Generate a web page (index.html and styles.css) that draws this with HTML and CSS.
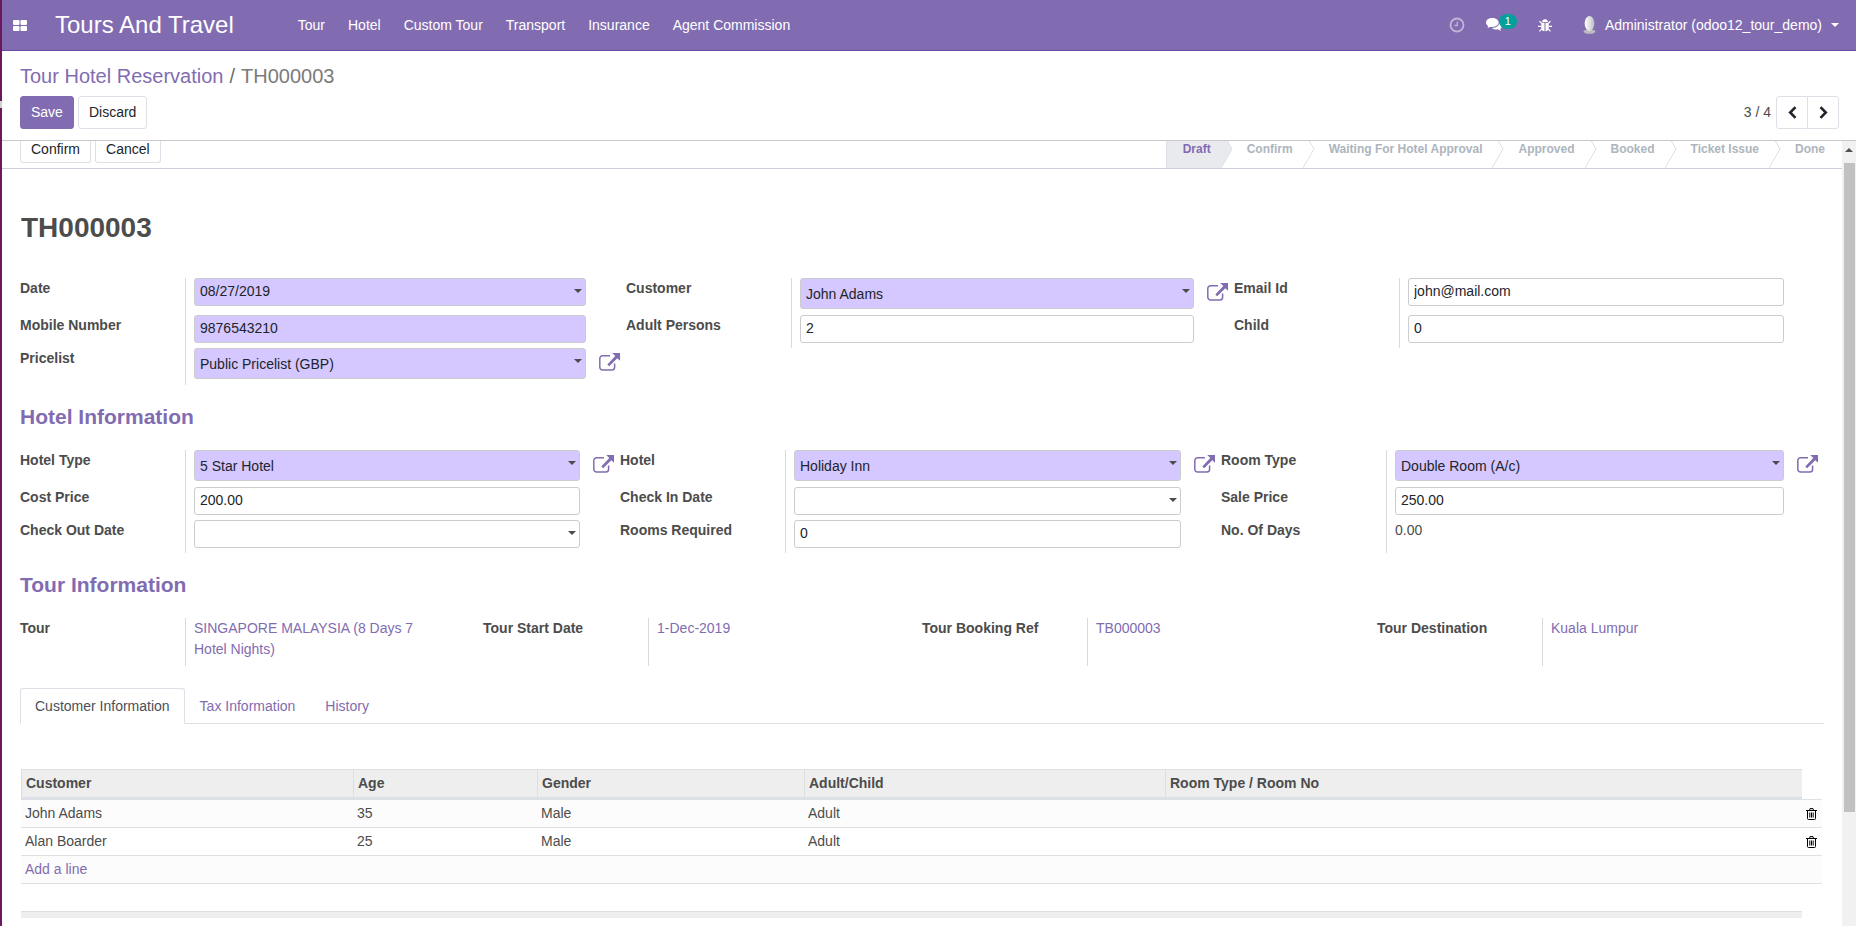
FILE: index.html
```html
<!DOCTYPE html>
<html lang="en">
<head>
    <meta charset="UTF-8">
    <meta name="viewport" content="width=device-width, initial-scale=1.0">
    <title>TH000003 - Tours And Travel</title>
    <link rel="stylesheet" href="styles.css">
</head>
<body>
    <!-- Shared icons -->
    <svg class="sprite" width="0" height="0">
        <symbol id="icon-external" viewBox="0 0 21 18">
            <path d="M11 2.7H3.6A2.8 2.8 0 0 0 .8 5.5v8.7A2.8 2.8 0 0 0 3.6 17h9.2a2.8 2.8 0 0 0 2.8-2.8V10.500" fill="none" stroke="currentColor" stroke-width="1.500"/>
            <path d="M13.200 0H21v7.800l-2.700-2.600-8.100 8.100-1.900-1.900 8-8.300z" fill="currentColor"/>
        </symbol>
        <symbol id="icon-trash" viewBox="0 0 11 12">
            <path d="M0 2.500h11M3.500 2.500l.5-1.900h3l.5 1.900M1.500 2.500v8q0 1 1 1h6q1 0 1-1v-8M3.800 4.500v5M5.500 4.500v5M7.200 4.500v5" fill="none" stroke="currentColor"/>
        </symbol>
        <symbol id="icon-step" viewBox="0 0 12 38">
            <path class="step-fill" d="M0 0l11 19L0 38z"/>
            <path class="step-line" d="M0 0l11 19L0 38"/>
        </symbol>
    </svg>

    <div class="screen">
        <div class="edge"></div>
        <div class="client">
            <header class="navbar">
                <button class="apps" aria-label="Applications">
                    <svg width="14" height="11" viewBox="0 0 14 11" fill="currentColor"><rect width="6.500" height="5" rx="1"/><rect x="7.500" width="6.500" height="5" rx="1"/><rect y="6" width="6.500" height="5" rx="1"/><rect x="7.500" y="6" width="6.500" height="5" rx="1"/></svg>
                </button>
                <a class="brand" href="#">Tours And Travel</a>
                <nav class="menu">
                    <a href="#">Tour</a>
                    <a href="#">Hotel</a>
                    <a href="#">Custom Tour</a>
                    <a href="#">Transport</a>
                    <a href="#">Insurance</a>
                    <a href="#">Agent Commission</a>
                </nav>
                <div class="systray">
                    <button class="tray-clock" aria-label="Activities">
                        <svg width="16" height="16" viewBox="0 0 16 16" fill="none" stroke="currentColor"><circle cx="8" cy="8" r="6.500" stroke-width="1.800"/><path d="M8.300 4.500v4H5.500" stroke-width="1.300"/></svg>
                    </button>
                    <button class="tray-chat" aria-label="Conversations">
                        <svg width="16" height="14" viewBox="0 0 16 14" fill="currentColor"><path d="M6.300 0C2.800 0 0 2 0 4.600c0 1.500.9 2.800 2.300 3.600-.2.700-.6 1.300-1.100 1.800 1.300-.1 2.400-.6 3.300-1.300.6.100 1.200.2 1.800.2 3.500 0 6.300-2 6.300-4.400S9.800 0 6.300 0z"/><path d="M13.600 4c.1 3.300-3.300 5.900-7.600 6 1.100 1 2.700 1.500 4.300 1.500.6 0 1.100 0 1.600-.2.900.7 2 1.200 3.300 1.400-.4-.5-.8-1.100-1-1.800 1.200-.8 1.800-1.800 1.800-3.100 0-1.500-.9-2.900-2.400-3.800z"/></svg>
                        <span class="badge">1</span>
                    </button>
                    <button class="tray-bug" aria-label="Debug">
                        <svg width="14" height="13" viewBox="0 0 14 13"><path d="M4.200 3a2.800 2.800 0 0 1 5.600 0z" fill="currentColor"/><path d="M3.300 3.700h3.200v8.600c-2 0-3.200-1.500-3.200-3.600zM7.500 3.700h3.200v5c0 2.100-1.200 3.600-3.200 3.600z" fill="currentColor"/><path d="M1.500 2.200l2.300 2.300M12.500 2.200l-2.300 2.300M0 7.300h3.500M14 7.300h-3.500M1.500 12.300l2.500-2.600M12.500 12.300L10 9.700" stroke="currentColor" stroke-width="1.200"/></svg>
                    </button>
                    <button class="user">
                        <svg width="13" height="18" viewBox="0 0 13 18"><defs><linearGradient id="face"><stop offset="0" stop-color="#fff"/><stop offset="1" stop-color="#bfc0c2"/></linearGradient></defs><ellipse cx="6.500" cy="15.600" rx="6" ry="2.200" fill="#bcbcc0"/><ellipse cx="6.500" cy="7.500" rx="4.800" ry="7.500" fill="url(#face)"/></svg>
                        <span>Administrator (odoo12_tour_demo)</span>
                        <svg width="8" height="4" viewBox="0 0 8 4"><path d="M0 0h8L4 4z" fill="currentColor"/></svg>
                    </button>
                </div>
            </header>

            <section class="control-panel">
                <div class="breadcrumb">
                    <a href="#">Tour Hotel Reservation</a>
                    <span>/</span>
                    <span class="current">TH000003</span>
                </div>
                <div class="panel-row">
                    <div class="buttons">
                        <button class="btn btn-primary">Save</button>
                        <button class="btn">Discard</button>
                    </div>
                    <div class="pager">
                        <span>3 / 4</span>
                        <div class="pager-buttons">
                            <button class="btn" aria-label="Previous"><svg width="9" height="13" viewBox="0 0 9 13"><path d="M7.500 1.200L2.200 6.500l5.300 5.300" fill="none" stroke="currentColor" stroke-width="2.600"/></svg></button>
                            <button class="btn" aria-label="Next"><svg width="9" height="13" viewBox="0 0 9 13"><path d="M1.500 1.200l5.300 5.300-5.300 5.300" fill="none" stroke="currentColor" stroke-width="2.600"/></svg></button>
                        </div>
                    </div>
                </div>
            </section>

            <div class="scroll-area">
                <main class="form-view">
                    <div class="statusbar">
                        <div class="buttons">
                            <button class="btn">Confirm</button>
                            <button class="btn">Cancel</button>
                        </div>
                        <div class="steps">
                            <div class="step active"><span>Draft</span><svg width="12" height="38"><use href="#icon-step"/></svg></div>
                            <div class="step"><span>Confirm</span><svg width="12" height="38"><use href="#icon-step"/></svg></div>
                            <div class="step"><span>Waiting For Hotel Approval</span><svg width="12" height="38"><use href="#icon-step"/></svg></div>
                            <div class="step"><span>Approved</span><svg width="12" height="38"><use href="#icon-step"/></svg></div>
                            <div class="step"><span>Booked</span><svg width="12" height="38"><use href="#icon-step"/></svg></div>
                            <div class="step"><span>Ticket Issue</span><svg width="12" height="38"><use href="#icon-step"/></svg></div>
                            <div class="step last"><span>Done</span></div>
                        </div>
                    </div>

                    <div class="sheet">
                        <h1>TH000003</h1>

                        <div class="group group-main">
                            <label for="date">Date</label>
                            <div class="field"><div class="dropdown"><input class="required" type="text" id="date" value="08/27/2019"></div></div>
                            <label for="customer">Customer</label>
                            <div class="field">
                                <div class="dropdown"><select class="required" id="customer"><option>John Adams</option></select></div>
                                <button class="external" aria-label="Open customer"><svg width="21" height="18"><use href="#icon-external"/></svg></button>
                            </div>
                            <label for="email">Email Id</label>
                            <div class="field"><input type="text" id="email" value="john@mail.com"></div>

                            <label for="mobile">Mobile Number</label>
                            <div class="field"><input class="required" type="text" id="mobile" value="9876543210"></div>
                            <label for="adults">Adult Persons</label>
                            <div class="field"><input type="text" id="adults" value="2"></div>
                            <label for="child">Child</label>
                            <div class="field"><input type="text" id="child" value="0"></div>

                            <label for="pricelist">Pricelist</label>
                            <div class="field">
                                <div class="dropdown"><select class="required" id="pricelist"><option>Public Pricelist (GBP)</option></select></div>
                                <button class="external" aria-label="Open pricelist"><svg width="21" height="18"><use href="#icon-external"/></svg></button>
                            </div>
                        </div>

                        <h2>Hotel Information</h2>
                        <div class="group group-hotel">
                            <label for="hotel-type">Hotel Type</label>
                            <div class="field">
                                <div class="dropdown"><select class="required" id="hotel-type"><option>5 Star Hotel</option></select></div>
                                <button class="external" aria-label="Open hotel type"><svg width="21" height="18"><use href="#icon-external"/></svg></button>
                            </div>
                            <label for="hotel">Hotel</label>
                            <div class="field">
                                <div class="dropdown"><select class="required" id="hotel"><option>Holiday Inn</option></select></div>
                                <button class="external" aria-label="Open hotel"><svg width="21" height="18"><use href="#icon-external"/></svg></button>
                            </div>
                            <label for="room-type">Room Type</label>
                            <div class="field">
                                <div class="dropdown"><select class="required" id="room-type"><option>Double Room (A/c)</option></select></div>
                                <button class="external" aria-label="Open room type"><svg width="21" height="18"><use href="#icon-external"/></svg></button>
                            </div>

                            <label for="cost">Cost Price</label>
                            <div class="field"><input type="text" id="cost" value="200.00"></div>
                            <label for="check-in">Check In Date</label>
                            <div class="field"><div class="dropdown"><input type="text" id="check-in"></div></div>
                            <label for="sale">Sale Price</label>
                            <div class="field"><input type="text" id="sale" value="250.00"></div>

                            <label for="check-out">Check Out Date</label>
                            <div class="field"><div class="dropdown"><input type="text" id="check-out"></div></div>
                            <label for="rooms">Rooms Required</label>
                            <div class="field"><input type="text" id="rooms" value="0"></div>
                            <label for="days">No. Of Days</label>
                            <div class="field"><output id="days">0.00</output></div>
                        </div>

                        <h2>Tour Information</h2>
                        <div class="group group-tour">
                            <strong>Tour</strong>
                            <div class="field"><a href="#">SINGAPORE MALAYSIA (8 Days 7 Hotel Nights)</a></div>
                            <strong>Tour Start Date</strong>
                            <div class="field"><a href="#">1-Dec-2019</a></div>
                            <strong>Tour Booking Ref</strong>
                            <div class="field"><a href="#">TB000003</a></div>
                            <strong>Tour Destination</strong>
                            <div class="field"><a href="#">Kuala Lumpur</a></div>
                        </div>

                        <div class="tabs">
                            <a class="tab active" href="#">Customer Information</a>
                            <a class="tab" href="#">Tax Information</a>
                            <a class="tab" href="#">History</a>
                        </div>

                        <table class="list">
                            <colgroup>
                                <col class="col-customer">
                                <col class="col-age">
                                <col class="col-gender">
                                <col class="col-adult">
                                <col>
                                <col class="col-trash">
                            </colgroup>
                            <thead>
                                <tr>
                                    <th>Customer</th>
                                    <th>Age</th>
                                    <th>Gender</th>
                                    <th>Adult/Child</th>
                                    <th>Room Type / Room No</th>
                                    <th class="trash"></th>
                                </tr>
                            </thead>
                            <tbody>
                                <tr>
                                    <td>John Adams</td>
                                    <td>35</td>
                                    <td>Male</td>
                                    <td>Adult</td>
                                    <td></td>
                                    <td class="trash"><button aria-label="Delete row"><svg width="11" height="12"><use href="#icon-trash"/></svg></button></td>
                                </tr>
                                <tr>
                                    <td>Alan Boarder</td>
                                    <td>25</td>
                                    <td>Male</td>
                                    <td>Adult</td>
                                    <td></td>
                                    <td class="trash"><button aria-label="Delete row"><svg width="11" height="12"><use href="#icon-trash"/></svg></button></td>
                                </tr>
                                <tr>
                                    <td colspan="6"><a href="#">Add a line</a></td>
                                </tr>
                                <tr class="blank">
                                    <td colspan="6"></td>
                                </tr>
                            </tbody>
                            <tfoot>
                                <tr>
                                    <td colspan="5"></td>
                                    <td class="trash"></td>
                                </tr>
                            </tfoot>
                        </table>
                    </div>
                </main>
                <div class="scrollbar">
                    <svg width="8" height="4" viewBox="0 0 8 4"><path d="M0 4h8L4 0z" fill="#505050"/></svg>
                    <div class="thumb"></div>
                </div>
            </div>
        </div>
    </div>
</body>
</html>
```

FILE: styles.css
```css
* {
    box-sizing: border-box;
}

body {
    margin: 0;
    font-family: "Liberation Sans", Arial, sans-serif;
    font-size: 14px;
    line-height: 21px;
    color: #4c4c4c;
    background: #fff;
}

a {
    color: #826cb1;
    text-decoration: none;
}

button,
input,
select {
    font: inherit;
    margin: 0;
}

svg {
    display: block;
    flex: none;
}

.sprite {
    position: absolute;
}

.screen {
    display: flex;
    height: 100vh;
    overflow: hidden;
}

.edge {
    width: 2px;
    flex: none;
    background: linear-gradient(#6a1a5c 101px, #cfcfcf 101px, #cfcfcf 108px, #6a1a5c 108px);
}

.client {
    flex: 1;
    min-width: 0;
    display: flex;
    flex-direction: column;
}

/* Top bar */
.navbar {
    flex: none;
    height: 51px;
    display: flex;
    align-items: center;
    padding: 0 17px 0 11px;
    background: #826cb1;
    border-bottom: 1px solid #6649a0;
    color: #fff;
}

.navbar a,
.navbar button {
    color: inherit;
}

.navbar button {
    display: flex;
    align-items: center;
    padding: 0;
    border: none;
    background: none;
}

.brand {
    margin: 0 64px 0 28px;
    font-size: 24px;
    line-height: 36px;
}

.menu {
    display: flex;
    gap: 23px;
}

.systray {
    display: flex;
    align-items: center;
    margin-left: auto;
}

.tray-clock {
    opacity: 0.5;
}

.navbar .tray-chat {
    position: relative;
    margin-left: 21px;
}

.badge {
    position: absolute;
    left: 13px;
    top: -4px;
    width: 18px;
    height: 15px;
    border-radius: 8px;
    background: #00a09d;
    font-size: 11px;
    line-height: 14px;
    text-align: center;
}

.navbar .tray-bug {
    margin-left: 36px;
}

.navbar .user {
    margin-left: 31px;
    gap: 9px;
}

/* Breadcrumb, buttons and pager */
.control-panel {
    flex: none;
    padding: 10px 17px 11px 18px;
    border-bottom: 1px solid #c9c9cc;
}

.breadcrumb {
    display: flex;
    gap: 6px;
    font-size: 20px;
    line-height: 30px;
    color: #6c6c6c;
}

.current {
    color: #7c7b7b;
}

.panel-row {
    display: flex;
    justify-content: space-between;
    align-items: center;
    margin-top: 5px;
}

.buttons {
    display: flex;
    gap: 4px;
}

.btn {
    height: 33px;
    padding: 5px 10px;
    border: 1px solid #dee0e8;
    border-radius: 3px;
    background: #fff;
    color: #212529;
}

.btn-primary {
    border-color: #826cb1;
    background: #826cb1;
    color: #fff;
}

.pager {
    display: flex;
    align-items: center;
    gap: 5px;
}

.pager-buttons {
    display: flex;
}

.pager-buttons .btn {
    width: 32px;
    padding: 0 11px;
}

.pager-buttons .btn:first-child {
    border-radius: 3px 0 0 3px;
}

.pager-buttons .btn:last-child {
    margin-left: -1px;
    border-radius: 0 3px 3px 0;
}

.scroll-area {
    flex: 1;
    min-height: 0;
    display: flex;
    overflow: hidden;
}

.form-view {
    flex: 1;
    min-width: 0;
}

/* The form is scrolled down a little under the control panel */
.statusbar {
    display: flex;
    justify-content: space-between;
    margin-top: -11px;
    padding-left: 18px;
    border-bottom: 1px solid #ced0d9;
}

.statusbar .buttons {
    align-items: flex-end;
    padding-bottom: 5px;
}

.statusbar .btn {
    height: 27px;
    padding: 0 10px;
    border-top: none;
    border-radius: 0 0 3px 3px;
}

.steps {
    display: flex;
    font-size: 12px;
    font-weight: bold;
    line-height: 38px;
    color: #adb5bd;
}

.step {
    display: flex;
    padding-left: 14px;
}

.step span {
    margin-right: 10px;
}

.step svg {
    fill: none;
}

.step-fill {
    fill: inherit;
}

.step-line {
    fill: none;
    stroke: #dee0e8;
}

.step.active {
    padding-left: 16px;
    border-left: 1px solid #dee0e8;
    background: linear-gradient(to left, #fff 12px, #e9eaee 12px);
    color: #826cb1;
}

.step.active svg {
    fill: #e9eaee;
}

.step.last span {
    margin-right: 17px;
}

/* Form */
.sheet {
    padding: 38px 18px 0;
}

h1 {
    margin: 0 0 29px;
    padding-left: 1px;
    font-size: 28px;
    line-height: 42px;
}

h2 {
    margin: 17px 0 18px;
    font-size: 21px;
    line-height: 30px;
    color: #826cb1;
}

.group {
    display: grid;
}

.group-main {
    grid-template-columns: 165px 441fr 165px 443fr 165px 425fr;
}

.group-hotel {
    grid-template-columns: 165px 435fr 165px 436fr 165px 438fr;
}

.group-tour {
    grid-template-columns: 165px 297fr 165px 273fr 165px 289fr 165px 281fr;
}

.group label,
.group strong {
    font-weight: bold;
}

.field {
    display: flex;
    align-items: flex-start;
    min-width: 0;
    padding: 0 40px 5px 8px;
    border-left: 1px solid #d9d9d9;
}

.group-tour .field {
    padding-bottom: 6px;
}

.dropdown {
    position: relative;
    flex: 1;
    min-width: 0;
}

.dropdown::after {
    content: "";
    position: absolute;
    top: 11px;
    right: 4px;
    border: 4px solid transparent;
    border-top-color: #4c4c4c;
    border-bottom: none;
}

.field input,
.field select {
    display: block;
    width: 100%;
    height: 28px;
    padding: 0 5px 2px;
    border: 1px solid #ccc;
    border-radius: 3px;
    background: #fff;
    color: #212529;
    appearance: none;
}

.field select {
    height: 31px;
    margin-bottom: 1px;
    padding: 2px 5px 0;
}

.field .required {
    background: #d5c7ff;
}

.external {
    margin: 5px -34px 0 13px;
    padding: 0;
    border: none;
    background: none;
    color: #826cb1;
}

/* Notebook */
.tabs {
    display: flex;
    margin-top: 22px;
    border-bottom: 1px solid #dee0e4;
}

.tab {
    margin-bottom: -1px;
    padding: 7px 14px 6px;
    border: 1px solid transparent;
    border-radius: 3px 3px 0 0;
}

.tab.active {
    border-color: #dee0e8;
    border-bottom-color: #fff;
    background: #fff;
    color: #495057;
}

.list {
    width: calc(100% - 3px);
    margin: 45px 2px 0 1px;
    table-layout: fixed;
    border-collapse: separate;
    border-spacing: 0;
}

.col-customer {
    width: 332px;
}

.col-age {
    width: 184px;
}

.col-gender {
    width: 267px;
}

.col-adult {
    width: 361px;
}

.col-trash {
    width: 20px;
}

.list th,
.list td {
    padding: 3px 4px;
    text-align: left;
    border-bottom: 1px solid #dee0e4;
}

.list th {
    background: #eee;
    border: 1px solid #dcdee0;
    border-right: none;
    border-bottom: 3px solid #dee0e8;
}

.list th.trash {
    background: none;
    border: none;
    border-bottom: 1px solid #dee0e8;
}

.list tbody tr:nth-child(odd) {
    background: #fcfcfc;
}

.list .blank td {
    height: 27px;
    border: none;
}

.list tfoot td {
    border: none;
    border-top: 1px solid #dcdee0;
    background: #eee;
}

.list tfoot .trash {
    border: none;
    background: none;
}

.trash button {
    display: block;
    padding: 0;
    border: none;
    background: none;
    color: #000;
}

/* Scroll bar */
.scrollbar {
    flex: none;
    width: 14px;
    display: flex;
    flex-direction: column;
    align-items: center;
    padding-top: 7px;
    background: #f1f1f1;
}

.thumb {
    width: 11px;
    height: calc(100% - 129px);
    margin-top: 11px;
    background: #c1c1c1;
}
```
